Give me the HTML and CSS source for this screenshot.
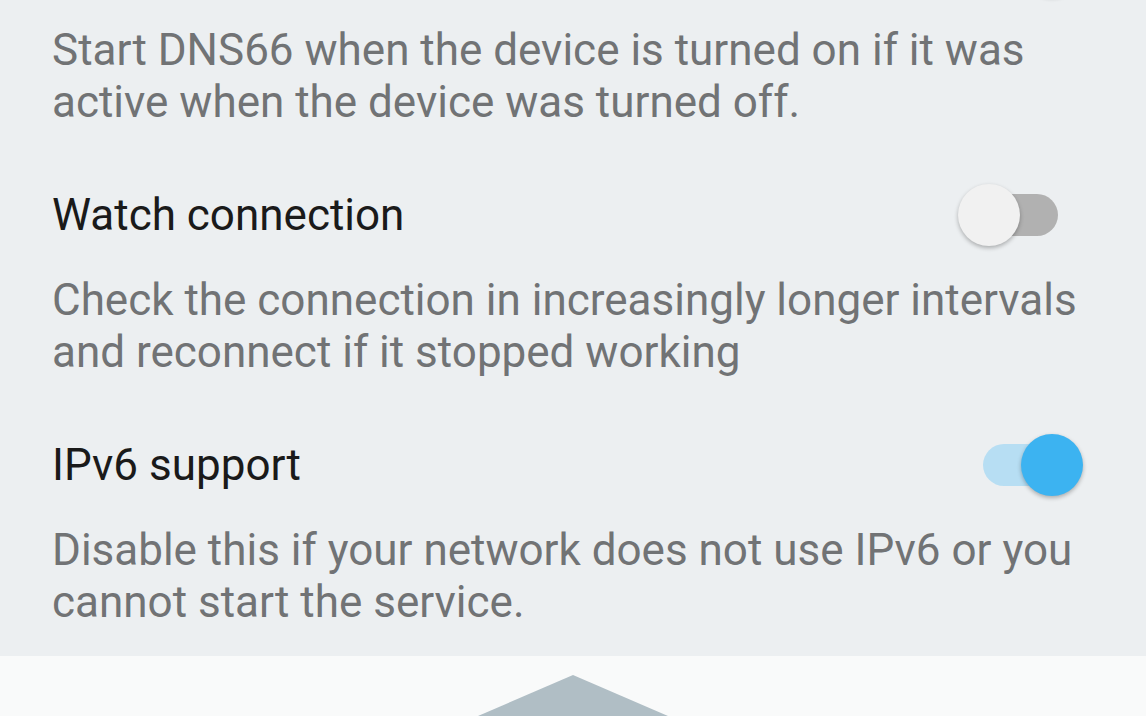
FILE: index.html
```html
<!DOCTYPE html>
<html>
<head>
<meta charset="utf-8">
<link rel="stylesheet" href="styles.css">
</head>
<body>
<div class="screen">
  <div class="prefs">
    <div class="pref">
      <div class="pref-row">
        <span class="pref-title"></span>
        <span class="switch on"><span class="track"></span><span class="thumb"></span></span>
      </div>
      <p class="pref-desc">Start DNS66 when the device is turned on if it was active when the device was turned off.</p>
    </div>
    <div class="pref">
      <div class="pref-row">
        <span class="pref-title">Watch connection</span>
        <span class="switch"><span class="track"></span><span class="thumb"></span></span>
      </div>
      <p class="pref-desc">Check the connection in increasingly longer intervals and reconnect if it stopped working</p>
    </div>
    <div class="pref">
      <div class="pref-row">
        <span class="pref-title">IPv6 support</span>
        <span class="switch on"><span class="track"></span><span class="thumb"></span></span>
      </div>
      <p class="pref-desc">Disable this if your network does not use IPv6 or you cannot start the service.</p>
    </div>
  </div>
  <div class="bottom-bar">
    <svg class="fab-peak" width="200" height="41" viewBox="0 0 200 41">
      <polygon points="100,0 5,41 195,41" fill="#b0bec5"/>
    </svg>
  </div>
</div>
</body>
</html>
```
FILE: styles.css
```css
html, body {
  margin: 0;
  padding: 0;
}
body {
  width: 1146px;
  height: 716px;
  overflow: hidden;
  background: #eceff1;
  font-family: Roboto, "Noto Sans", sans-serif;
}
.screen {
  display: flex;
  flex-direction: column;
  height: 716px;
}
.prefs {
  flex: 1;
  min-height: 0;
  margin-top: -96px;
  padding: 0 52px 0 52px;
  display: flex;
  flex-direction: column;
}
.pref {
  padding: 26px 0 26px;
  display: flex;
  flex-direction: column;
  flex-shrink: 0;
}
.pref-row {
  height: 70px;
  display: flex;
  align-items: center;
  justify-content: space-between;
}
.pref-title {
  font-size: 44px;
  color: #1a1a1a;
}
.pref-desc {
  margin: 24px 0 0;
  font-size: 44px;
  line-height: 52px;
  color: #717375;
}
.switch {
  position: relative;
  width: 125px;
  height: 64px;
  margin-right: 11px;
  display: flex;
  align-items: center;
  flex-shrink: 0;
}
.switch .track {
  margin-left: 25px;
  width: 75px;
  height: 42px;
  border-radius: 21px;
  background: #b1b1b1;
}
.switch .thumb {
  position: absolute;
  left: 0;
  top: 1px;
  width: 62px;
  height: 62px;
  border-radius: 50%;
  background: #f1f1f1;
  box-shadow: 0 2px 4px rgba(0,0,0,0.28);
}
.switch.on .track {
  background: #b7def3;
}
.switch.on .thumb {
  left: 63px;
  background: #3cb3f1;
}
.bottom-bar {
  height: 60px;
  flex-shrink: 0;
  background: #f9fafa;
  display: flex;
  justify-content: center;
  align-items: flex-end;
  position: relative;
  z-index: 1;
}
.fab-peak {
  display: block;
  margin-left: -1px;
}
```
